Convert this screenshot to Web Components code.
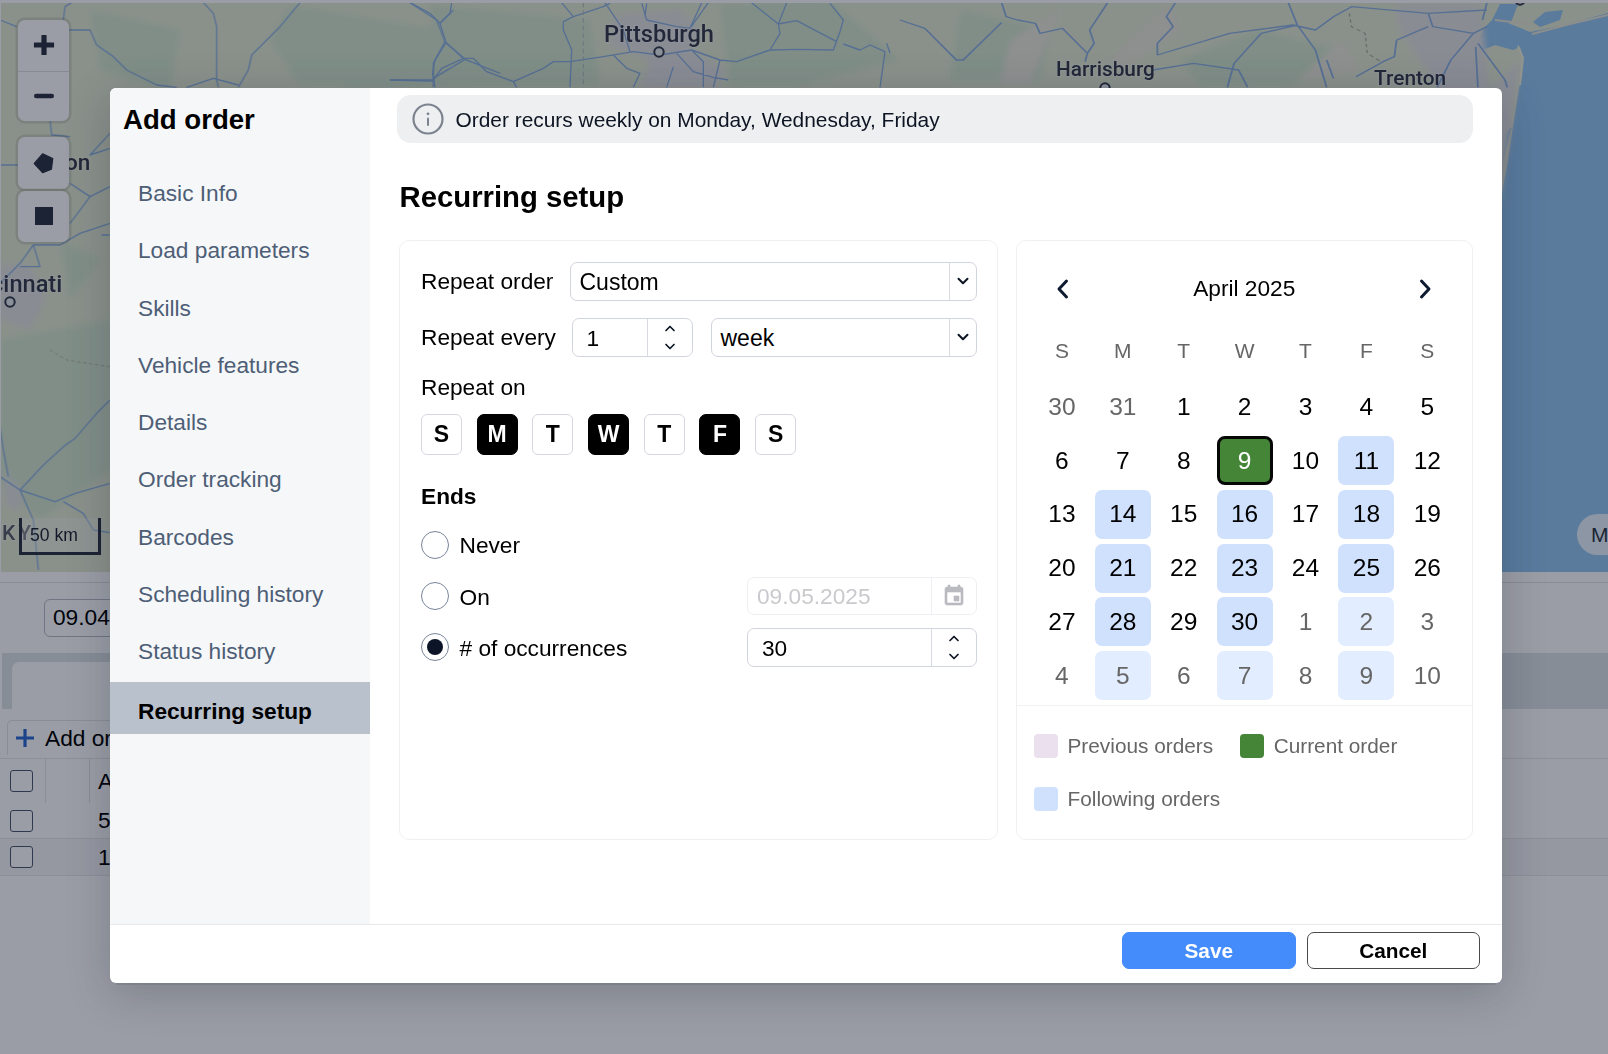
<!DOCTYPE html>
<html lang="en"><head><meta charset="utf-8"><title>Add order</title>
<style>
html,body{margin:0;padding:0;height:100%;overflow:hidden;background:#fff}
body{font-family:"Liberation Sans",Arial,sans-serif;font-size:22.7px;color:#000}
</style></head><body>
<app-screen>
  <map-view>
    <map-zoom-controls></map-zoom-controls>
    <map-scale></map-scale>
    <map-pill>Map</map-pill>
  </map-view>
  <order-board></order-board>
  <modal-overlay>
    <order-modal>
      <h2 slot="title">Add order</h2>
      <nav-item slot="nav">Basic Info</nav-item>
      <nav-item slot="nav">Load parameters</nav-item>
      <nav-item slot="nav">Skills</nav-item>
      <nav-item slot="nav">Vehicle features</nav-item>
      <nav-item slot="nav">Details</nav-item>
      <nav-item slot="nav">Order tracking</nav-item>
      <nav-item slot="nav">Barcodes</nav-item>
      <nav-item slot="nav">Scheduling history</nav-item>
      <nav-item slot="nav">Status history</nav-item>
      <nav-item slot="nav" active>Recurring setup</nav-item>

      <info-banner>Order recurs weekly on Monday, Wednesday, Friday</info-banner>
      <page-title>Recurring setup</page-title>
      <setup-layout>
        <repeat-form slot="form"></repeat-form>
        <month-calendar slot="calendar"></month-calendar>
      </setup-layout>

      <app-button slot="footer" kind="primary">Save</app-button>
      <app-button slot="footer">Cancel</app-button>
    </order-modal>
  </modal-overlay>
</app-screen>

<script>
const CHEV_DOWN='<svg width="14" height="14" viewBox="0 0 14 14"><path d="M2.5 4.8 7 9.3l4.5-4.5" fill="none" stroke="currentColor" stroke-width="2" stroke-linecap="round" stroke-linejoin="round"/></svg>';
const STEP='<svg width="14" height="36" viewBox="0 0 14 36"><path d="M3 11.5 7 7.500l4 4M3 25.500l4 4 4-4" fill="none" stroke="currentColor" stroke-width="1.7" stroke-linecap="round" stroke-linejoin="round"/></svg>';

function def(name,css,html,setup){
  customElements.define(name,class extends HTMLElement{
    connectedCallback(){
      if(this.shadowRoot)return;
      const r=this.attachShadow({mode:'open'});
      const body=typeof html==='function'?html(this):html;
      r.innerHTML='<style>'+css+'</style>'+body;
      if(setup)setup(this,r);
    }
  });
}

def('app-screen',':host{display:block;position:relative;width:1608px;height:1054px;overflow:hidden;background:#fff}','<slot></slot>');

/* ---------- map ---------- */
const roadsZ10=`M120 8 180 40 210 70 228 128 280 175 310 175 350 215 430 245 440 262M245 8 240 40 210 70M228 128 195 180 188 220 195 262M60 240 190 243M280 175 215 205 190 240M575 8 610 50 580 65 580 90 605 150 600 262M430 245 520 205 550 185 600 185 700 170 790 155 870 165 965 150 1050 180 1100 185 1200 150 1280 148 1390 150 1410 95 1420 60 1380 10M610 50 700 20 720 10M705 8 760 90 780 155M815 8 830 60 920 80 960 85 995 8M830 10 825 50M960 85 1015 8M1145 8 1225 72 1280 62 1400 125M1225 72 1250 8M1225 72 1230 100 1200 150M965 150 1000 185 1000 262M1050 180 1030 262M730 165 770 205 810 220 790 262M920 160 970 215 1030 232 1075 240M1420 132 1470 150 1500 135 1545 155 1530 262M1550 130 1560 160M890 262 910 200`;
const roadsZ1=`M190 60 195 20 215 8M0 60 50 80M205 90 270 90 290 135 340 170 380 210 470 255 530 262M610 8 640 40 650 80 650 240 655 262M900 8 840 80 755 165 745 210 715 262M1230 8 1310 60 1335 125 1395 178 1300 235 1300 262M1320 70 1360 30M1335 125 1300 190 1300 240M1395 178 1500 220M1170 240 1300 240M560 262 640 235 715 255M150 360 155 405 210 410M330 400 270 465 330 445M0 495 100 495 205 490M210 550 270 590 330 560M330 670 240 700 180 735 100 735 60 790 20 830 0 850M100 735 120 800 60 800M270 590 210 670M305 705 330 705`;
const roadsZ2=`M330 150 290 190 225 265 190 290 130 345 60 420 0 380M60 420 165 455 225 430 330 400M0 230 10 300 25 380M190 455 250 490 280 540 330 548M60 420 100 510 115 660`;
const roadsZ9=`M225 8 235 50 260 60 300 70 310 100 360 85 415 160 430 130 420 90 460 8M0 60 55 85 125 180 140 180 225 68M610 8 590 50 605 80 570 130 570 165M415 160 410 185M570 165 730 100 870 75 920 90 960 50 1000 20 1170 40 1180 80 1270 100 1300 80M860 8 880 75 920 150 945 262M880 75 800 100 740 190 725 262M560 210 650 190 750 210 770 262M1100 120 1170 80M1100 120 1095 170 1070 185 1010 230M945 180 960 235M1270 100 1220 180 1190 262M1280 130 1340 240 1345 262M1275 140 1280 262M1170 40 1300 30M1300 8 1290 60`;
def('map-view',`:host{display:block;height:569px;margin:3px 0 0 1px;position:relative;overflow:hidden;background:#94c6f1}
svg{position:absolute;inset:0;width:100%;height:100%;display:block}
text{font-family:Roboto,"Liberation Sans",sans-serif;font-weight:500;fill:#383d4c;stroke:rgba(255,255,255,.25);stroke-width:2px;paint-order:stroke}
.r{fill:none;stroke:#8eb3e2;stroke-width:4;stroke-linejoin:round}`,
`<svg viewBox="1 3 1607 569" preserveAspectRatio="none" aria-label="Map">
<defs><filter id="b" x="-5%" y="-5%" width="110%" height="110%"><feGaussianBlur stdDeviation="3"/></filter><filter id="s"><feGaussianBlur stdDeviation=".5"/></filter></defs>
<path fill="#e5ebd3" d="M0 0H1608V13L1590 18 1560 26 1530 32 1518 27 1505 22 1495 35 1478 40 1483 50 1495 45 1513 50 1520 47 1523 58 1522 70 1518 95 1513 126 1507 166 1502 192 1480 572H0Z"/>
<g fill="#94c6f1"><path d="M1500 4 1518 4 1512 20 1498 35 1478 40 1484 28 1492 20Z"/><path d="M1533 22 1545 12 1563 10 1560 20 1540 27Z"/><path d="M1512 127 1504 135 1502 165 1506 150Z"/></g>
<g fill="#d4e6ce" filter="url(#b)">
<path d="M90 10 180 30 170 90 100 70Z"/><path d="M290 5 440 30 480 85 300 85 270 40Z"/><path d="M320 70 445 20 470 85 350 90Z"/><path d="M0 340 110 320 110 470 40 520 0 480Z"/><path d="M60 240 100 260 70 300Z"/><path d="M430 5 590 20 600 85 440 85Z"/><path d="M720 5 830 0 900 60 800 85 730 85Z"/><path d="M960 10 1050 30 1040 80 950 80Z"/><path d="M1180 60 1260 30 1340 50 1290 85 1200 85Z"/></g>
<g fill="#ebe9dc" filter="url(#b)"><path d="M1000 85 1010 40 1060 10 1030 85Z"/><path d="M1110 60 1170 5 1180 30 1120 70Z"/><path d="M1300 80 1340 40 1360 70Z"/></g>
<g fill="#e3e3e2" filter="url(#b)"><path d="M615 15 680 10 700 30 690 50 725 70 715 88 640 88 650 60 610 45Z"/><path d="M0 265 30 265 45 300 30 330 0 320Z"/><path d="M1395 5 1480 5 1490 90 1520 60 1500 200 1440 90 1400 30Z"/><path d="M4 470 22 490 20 510 6 505Z"/></g>
<g filter="url(#s)">
<g transform="translate(370 0) scale(.33333)"><path class="r" d="${roadsZ10}"/><path d="M640 8V262" fill="none" stroke="#b4bcb8" stroke-width="3" stroke-dasharray="14 9"/></g>
<g transform="scale(.33333)"><path class="r" d="${roadsZ1}"/></g>
<g transform="translate(0 350) scale(.33333)"><path class="r" d="${roadsZ2}"/><path d="M150 0 200 30 330 50" fill="none" stroke="#b4baaa" stroke-width="3" stroke-dasharray="10 8"/></g>
<g transform="translate(900 0) scale(.4515 .33333)"><path class="r" d="${roadsZ9}"/><path d="M995 40 1000 80 1030 100 1035 160 1065 185" fill="none" stroke="#aab39e" stroke-width="3" stroke-dasharray="10 8"/></g>
<path d="M1532 34 1570 24 1608 15M1495 20 1530 24" fill="none" stroke="#e8e6d6" stroke-width="2"/>
<path d="M1518 46 1523 58 1520 85" fill="none" stroke="#f2f0dc" stroke-width="2"/>
</g>
<text x="604" y="41.500" font-size="23.600">Pittsburgh</text><circle cx="659" cy="52" r="4.700" fill="#e6ecec" stroke="#383d4c" stroke-width="2"/>
<text x="1056" y="76" font-size="20.800">Harrisburg</text><circle cx="1105" cy="88" r="4.700" fill="#e6ecec" stroke="#383d4c" stroke-width="2"/>
<text x="1374" y="85" font-size="20.900">Trenton</text>
<circle cx="1520" cy="0" r="4.700" fill="none" stroke="#383d4c" stroke-width="2"/>
<text x="20" y="170" font-size="22.500">Dayton</text>
<text x="-43.500" y="292" font-size="23.600">Cincinnati</text><circle cx="10" cy="302" r="4.700" fill="#e6ecec" stroke="#383d4c" stroke-width="2"/>
<text x="-96" y="540" font-size="21" letter-spacing="3" style="fill:#5b5f68">KENTUCKY</text>
</svg><slot></slot>`);

def('map-zoom-controls',`:host{position:absolute;left:17px;top:17px;display:flex;flex-direction:column;width:51px}
.g{background:#fff;border-radius:7px;box-shadow:0 0 0 2.5px rgba(70,70,50,.14);display:flex;flex-direction:column}
.g.z{margin-bottom:16px}.g.m{margin-bottom:2px}
.b{height:50.500px;display:grid;place-items:center}
.b+.b{height:49.500px;border-top:1px solid #dcdfe4}
svg{display:block;color:#2e3444;fill:currentColor}`,
`<div class="g z"><div class="b"><svg width="22" height="22" viewBox="0 0 22 22"><path d="M9 1.500h4V9h7.500v4H13v7.500H9V13H1.500V9H9z" stroke="currentColor" stroke-width="1.200" stroke-linejoin="round"/></svg></div><div class="b"><svg width="22" height="22" viewBox="0 0 22 22"><rect x="1" y="8.800" width="20" height="4.400" rx="2.200"/></svg></div></div>
<div class="g m"><div class="b" style="height:51.500px"><svg width="21" height="22" viewBox="0 0 24 24"><path d="M11 1.500 22.500 7 21 19 11 23 1.500 12.500Z" stroke="currentColor" stroke-width="1.500" stroke-linejoin="round"/></svg></div></div>
<div class="g"><div class="b" style="height:51.500px"><svg width="18" height="18" viewBox="0 0 18 18"><rect width="18" height="18"/></svg></div></div>`);

def('map-scale',`:host{position:absolute;left:18px;top:515px;width:82px;height:37px;box-sizing:border-box;border:solid #2e3444;border-width:0 3px 3px;background:rgba(255,255,255,.26);font-size:17.600px;line-height:34px;color:#1f2433;padding-left:8px}`,'50 km');
def('map-pill',`:host{position:absolute;left:1576px;top:511px;width:80px;height:41px;border-radius:21px;background:#fff;opacity:.8;padding-left:14px;box-sizing:border-box;line-height:41px;font-size:21px;color:#111}`,'<slot></slot>');

/* ---------- board behind the dialog ---------- */
def('order-board',`:host{display:block;height:482px}
.top{height:81px;box-sizing:border-box;padding:27px 0 0 44px;background:linear-gradient(#fff 10px,#dfe2e6 10px,#dfe2e6 11px,#fff 11px)}
.date{width:240px;height:38px;box-sizing:border-box;border:1.500px solid #b9bdc6;border-radius:6px;padding-left:8px;line-height:35px}
.band{height:56px;box-sizing:border-box;background:#dfe4e6;padding:9px 0 0 10px;margin-left:2px}
.tab{width:300px;height:47px;background:#fff;border-radius:7px 7px 0 0}
.bar{height:50px;box-sizing:border-box;padding:11px 0 0 7px;border-bottom:1px solid #e6e8eb}
.add{width:200px;height:35px;display:flex;align-items:center;gap:11px;padding-left:8px;border:solid #e3e5ea;border-width:1px 0 0 1px;border-radius:5px 0 0 0;box-sizing:border-box}
.row{display:grid;grid-template-columns:43px 44px 1fr;align-items:stretch;padding-left:3px;border-bottom:1px solid #e6e8eb;height:36px;box-sizing:border-box}
.row.h{height:44px;border-bottom:0}.row.alt{height:37px;background:#f7f7f8}
.row>*{display:flex;align-items:center}
.cell{border-right:1px solid #e2e4e8}
.t{padding-left:8px}
.cb{width:23px;height:22px;box-sizing:border-box;border:1.500px solid #4f5a70;border-radius:3px;margin-left:7px;background:#fff}`,
`<div class="top"><div class="date">09.04.2025</div></div>
<div class="band"><div class="tab"></div></div>
<div class="bar"><div class="add"><svg width="18" height="18" viewBox="0 0 18 18"><path d="M9 0v18M0 9h18" stroke="#2f6bd3" stroke-width="3.200"/></svg><span>Add order</span></div></div>
<div class="row h"><div class="cell"><span class="cb"></span></div><div class="cell"></div><div class="t">Address</div></div>
<div class="row"><div><span class="cb"></span></div><div></div><div class="t">5</div></div>
<div class="row alt"><div><span class="cb"></span></div><div></div><div class="t">1</div></div>`);

/* ---------- dialog ---------- */
def('modal-overlay',`:host{position:absolute;inset:0;box-sizing:border-box;padding:88px 106px 71px 110px;background:rgba(3,10,30,.4);display:flex}`,'<slot></slot>');
def('order-modal',`:host{flex:1;display:grid;grid-template-columns:260px 1fr;grid-template-rows:836px 59px;background:#fff;border-radius:6px;overflow:visible;box-shadow:0 8px 0 -6px rgba(30,35,50,.1),0 10px 44px rgba(20,24,40,.22)}
aside{background:#f6f7f9;border-top-left-radius:6px;min-height:0}
.title{height:61px;padding:14px 0 0 13px;box-sizing:border-box}
::slotted(h2){margin:0;font-size:27.600px;line-height:36px;font-weight:700}
.nav{padding-top:15.800px;display:flex;flex-direction:column}
main{padding:7px 29px 0 27px;box-sizing:border-box;min-width:0}
footer{grid-column:1/3;border-top:1.500px solid #e9e9eb;display:flex;justify-content:flex-end;gap:11px;padding:7px 22px 0 0;box-sizing:border-box}`,
`<aside><div class="title"><slot name="title"></slot></div><div class="nav"><slot name="nav"></slot></div></aside>
<main><slot></slot></main>
<footer><slot name="footer"></slot></footer>`);

def('nav-item',`:host{display:flex;align-items:center;height:57.300px;padding-left:28px;color:#4d5e76;white-space:nowrap}
:host([active]){height:52px;box-sizing:border-box;margin-top:1.700px;padding-top:7px;background:#b9c1cc;color:#000;font-weight:700}`,'<slot></slot>');

def('info-banner',`:host{display:flex;align-items:center;gap:11.500px;height:48px;padding-left:15px;border-radius:14px;background:#eeeff1;color:#0d1422;font-size:20.900px}
svg{flex:none}span{padding-top:2px}`,
`<svg width="32" height="32" viewBox="0 0 32 32"><circle cx="16" cy="16" r="14.500" fill="none" stroke="#7b838f" stroke-width="2.200"/><circle cx="16" cy="10.800" r="1.400" fill="#7b838f"/><rect x="15" y="14.500" width="2" height="8.500" rx="1" fill="#7b838f"/></svg><span><slot></slot></span>`);

def('page-title',`:host{display:block;margin:36px 0 0 2.500px;height:35px;line-height:35px;font-size:29.300px;font-weight:700}`,'<slot></slot>');

def('setup-layout',`:host{display:grid;grid-template-columns:599px 456.500px;column-gap:18px;margin:26px 0 0 2px;height:600px}`,'<slot name="form"></slot><slot name="calendar"></slot>');

def('select-field',`:host{display:flex;flex:1;height:38.500px;box-sizing:border-box;border:1.500px solid #d0d4dd;border-radius:7px;background:#fff;align-items:center}
.v{flex:1;padding:2px 0 0 9px;font-size:23px}.c{width:26px;height:100%;border-left:1.500px solid #d7dae2;display:grid;place-items:center;color:#0c1524}`,
h=>`<div class="v">${h.getAttribute('value')}</div><div class="c">${CHEV_DOWN}</div>`);

def('number-field',`:host{display:flex;height:38.500px;box-sizing:border-box;border:1.500px solid #d0d4dd;border-radius:7px;background:#fff;align-items:center}
.v{flex:1;padding:2px 0 0 14px}.c{height:100%;border-left:1.500px solid #d7dae2;display:grid;place-items:center;color:#0c1524}`,
h=>`<div class="v">${h.getAttribute('value')}</div><div class="c" style="width:${h.getAttribute('step-width')||44}px">${STEP}</div>`);

def('date-field',`:host{display:flex;height:38.500px;box-sizing:border-box;border:1.500px solid #eeeff2;border-radius:7px;background:#fff;align-items:center;color:#c9cacd}
.v{flex:1;padding:1px 0 0 9px}.c{width:44px;height:100%;border-left:1.500px solid #eeeff2;display:grid;place-items:center}`,
h=>`<div class="v">${h.getAttribute('value')}</div><div class="c"><svg width="24" height="24" viewBox="0 0 24 24"><path fill="#b9bbc1" stroke="#b9bbc1" stroke-width=".6" d="M17 12h-5v5h5v-5zM16 1v2H8V1H6v2H5c-1.110 0-1.990.9-1.990 2L3 19c0 1.100.89 2 2 2h14c1.100 0 2-.9 2-2V5c0-1.100-.9-2-2-2h-1V1h-2zm3 18H5V8h14v11z"/></svg></div>`);

def('day-toggle',`:host{display:grid;place-items:center;width:41px;height:41.500px;box-sizing:border-box;border:1.500px solid #d6d7e0;border-radius:6px;font-weight:700;font-size:23px;background:#fff}
:host([on]){background:#000;border-color:#000;color:#fff;border-radius:7px}`,'<slot></slot>');

def('radio-option',`:host{display:flex;align-items:center;gap:10.500px;height:38.500px}
i{display:block;width:28px;height:28px;box-sizing:border-box;border:1.500px solid #78849a;border-radius:50%;position:relative;background:#fff}
span{padding-top:2px}
:host([checked]) i::after{content:"";position:absolute;inset:5px;border-radius:50%;background:#0c1428}`,
'<i></i><span><slot></slot></span>');

def('repeat-form',`:host{display:block;box-sizing:border-box;height:600px;border:1px solid #f0f0f3;border-radius:10px;padding:21px 20px 0 21px}
.row{display:flex;align-items:center}
.l1{width:148.500px;flex:none;padding-top:1px}.l2{width:150.500px;flex:none;padding-top:1px}
.gap{margin-top:17.500px}
number-field.rep{width:121px;flex:none;margin-right:18px}
.on{margin-top:17.500px;line-height:26px}
.days{display:flex;gap:14.700px;margin-top:13.500px}
.ends{margin-top:27.500px;line-height:26px;font-weight:700}
.grid{display:grid;grid-template-columns:1fr 230px;row-gap:12.800px;margin-top:17px}
.sp{grid-column:1/3}`,
`<div class="row"><span class="l1">Repeat order</span><select-field value="Custom"></select-field></div>
<div class="row gap"><span class="l2">Repeat every</span><number-field class="rep" value="1" step-width="44"></number-field><select-field value="week"></select-field></div>
<div class="on">Repeat on</div>
<div class="days"><day-toggle>S</day-toggle><day-toggle on>M</day-toggle><day-toggle>T</day-toggle><day-toggle on>W</day-toggle><day-toggle>T</day-toggle><day-toggle on>F</day-toggle><day-toggle>S</day-toggle></div>
<div class="ends">Ends</div>
<div class="grid">
<radio-option class="sp">Never</radio-option>
<radio-option>On</radio-option><date-field value="09.05.2025"></date-field>
<radio-option checked># of occurrences</radio-option><number-field value="30" step-width="44"></number-field>
</div>`);

def('legend-item',`:host{display:flex;align-items:center;gap:9.500px;font-size:20.800px;color:#666;height:24px}
i{display:block;width:24px;height:24px;border-radius:4px;flex:none}`,
h=>`<i style="background:${h.getAttribute('color')}"></i><span><slot></slot></span>`);

def('month-calendar',`:host{display:flex;flex-direction:column;box-sizing:border-box;height:600px;border:1px solid #f0f0f3;border-radius:10px}
.head{display:flex;align-items:center;justify-content:space-between;height:36px;margin-top:29.500px;padding:0 34px 0 34px}
.head span{line-height:34px;padding-bottom:2px}
.head svg{display:block;color:#0d1a30}
.grid{display:grid;grid-template-columns:repeat(7,60.900px);grid-template-rows:51px repeat(6,49px);row-gap:4.800px;margin:20px 0 0 14.500px;width:426.300px}
.d{display:grid;place-items:center;width:56px;height:49px;justify-self:center;border-radius:7px;font-size:24.500px;box-sizing:border-box}
.w{font-size:21px;color:#666;height:49px}
.m{color:#666}
.f{background:#d0e1fd}.f.m{background:#e2edff}
.c{background:#448538;color:#fff;border:3.500px solid #060806;border-radius:8px}
.foot{margin-top:5px;border-top:1.500px solid #f1f1f3;padding:27.500px 17px 0;display:flex;flex-wrap:wrap;column-gap:27px;row-gap:29px}`,
()=>{
  const w=['S','M','T','W','T','F','S'].map(x=>`<div class="d w">${x}</div>`).join('');
  const days=[];
  [30,31].forEach(n=>days.push({n,m:1}));
  for(let n=1;n<=30;n++)days.push({n});
  for(let n=1;n<=10;n++)days.push({n,m:1});
  const cells=days.map((o,i)=>{
    const col=i%7;let cl='d';
    if(o.m)cl+=' m';
    if(i===10)cl+=' c';
    else if(i>10&&(col===1||col===3||col===5))cl+=' f';
    return `<div class="${cl}">${o.n}</div>`;
  }).join('');
  return `<div class="head"><svg width="24" height="24" viewBox="0 0 24 24"><path d="M15.500 4 8 12l7.500 8" fill="none" stroke="currentColor" stroke-width="3" stroke-linecap="round" stroke-linejoin="round"/></svg><span>April 2025</span><svg width="24" height="24" viewBox="0 0 24 24"><path d="M8.500 4 16 12l-7.500 8" fill="none" stroke="currentColor" stroke-width="3" stroke-linecap="round" stroke-linejoin="round"/></svg></div>
  <div class="grid">${w}${cells}</div>
  <div class="foot"><legend-item color="#eae0ee">Previous orders</legend-item><legend-item color="#448538">Current order</legend-item><legend-item color="#d0e1fd">Following orders</legend-item></div>`;
});

def('app-button',`:host{display:grid;place-items:center;width:173.500px;height:37px;box-sizing:border-box;border:1.500px solid #4a4a4a;border-radius:7px;font-weight:700;font-size:20.800px;background:#fff;color:#000}
:host([kind=primary]){background:#448cfb;border-color:#448cfb;color:#fff}`,'<slot></slot>');
</script>
</body></html>
